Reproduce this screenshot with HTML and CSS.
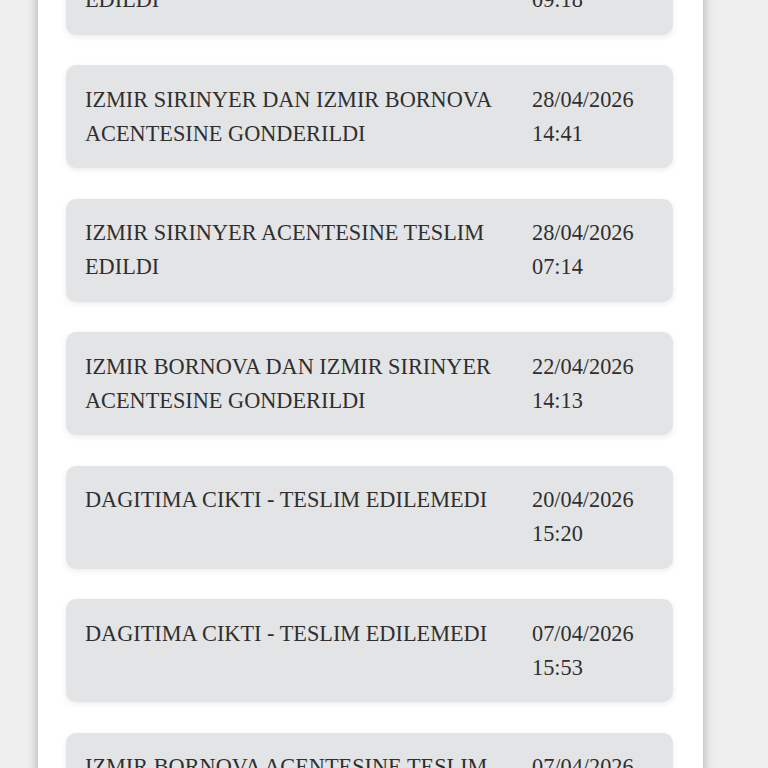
FILE: index.html
```html
<!DOCTYPE html>
<html lang="tr">
<head>
<meta charset="utf-8">
<title>Kargo Takip</title>
<link rel="stylesheet" href="styles.css">
</head>
<body>
<main class="panel">
  <div class="card">
    <div class="desc">IZMIR SIRINYER ACENTESINE TESLIM EDILDI</div>
    <div class="date">29/04/2026 09:18</div>
  </div>
  <div class="card">
    <div class="desc">IZMIR SIRINYER DAN IZMIR BORNOVA ACENTESINE GONDERILDI</div>
    <div class="date">28/04/2026 14:41</div>
  </div>
  <div class="card">
    <div class="desc">IZMIR SIRINYER ACENTESINE TESLIM EDILDI</div>
    <div class="date">28/04/2026 07:14</div>
  </div>
  <div class="card">
    <div class="desc">IZMIR BORNOVA DAN IZMIR SIRINYER ACENTESINE GONDERILDI</div>
    <div class="date">22/04/2026 14:13</div>
  </div>
  <div class="card">
    <div class="desc">DAGITIMA CIKTI - TESLIM EDILEMEDI</div>
    <div class="date">20/04/2026 15:20</div>
  </div>
  <div class="card">
    <div class="desc">DAGITIMA CIKTI - TESLIM EDILEMEDI</div>
    <div class="date">07/04/2026 15:53</div>
  </div>
  <div class="card">
    <div class="desc">IZMIR BORNOVA ACENTESINE TESLIM EDILDI</div>
    <div class="date">07/04/2026 09:02</div>
  </div>
</main>
</body>
</html>
```
FILE: styles.css
```css
html, body {
  margin: 0;
  padding: 0;
}
body {
  background: #efefef;
  font-family: "Liberation Serif", "Times New Roman", serif;
  color: #2f2f2f;
  overflow: hidden;
  height: 768px;
}
.panel {
  margin: -68.5px 0 0 38px;
  width: 665px;
  box-sizing: border-box;
  padding: 0 30px 0 28px;
  background: #ffffff;
  box-shadow: 0 0 11px rgba(0, 0, 0, 0.3);
  min-height: 900px;
}
.card {
  display: grid;
  grid-template-columns: 1fr 122px;
  column-gap: 20px;
  padding: 17.5px 19px;
  margin-bottom: 30.5px;
  background: #e3e4e6;
  border-radius: 10px;
  box-shadow: 0 2px 6px rgba(0, 0, 0, 0.08);
  font-size: 22.3px;
  line-height: 34px;
}
.desc, .date {
  margin: 0;
}
```
